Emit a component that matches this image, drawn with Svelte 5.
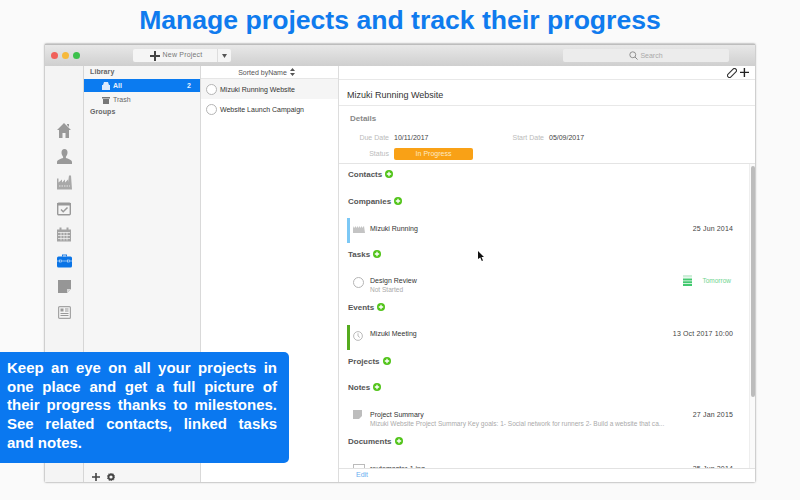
<script>
  const sections = [
    { name: "Contacts" },
    { name: "Companies", row: { kind: "company", title: "Mizuki Running", date: "25 Jun 2014", bar: "#7cc8f5" } },
    { name: "Tasks", row: { kind: "task", title: "Design Review", sub: "Not Started" } },
    { name: "Events", row: { kind: "event", title: "Mizuki Meeting", date: "13 Oct 2017 10:00", bar: "#55ab1e" } },
    { name: "Projects" },
    { name: "Notes", row: { kind: "note", title: "Project Summary", date: "27 Jan 2015", sub: "Mizuki Website Project Summary Key goals: 1- Social network for runners 2- Build a website that ca..." } },
    { name: "Documents", row: { kind: "doc", title: "routemaster-1.jpg", date: "25 Jun 2014" } }
  ];
</script>

<main>
  <h1>Manage projects and track their progress</h1>

  <div class="window">
    <div class="titlebar">
      <div class="lights">
        <span class="red"></span>
        <span class="yellow"></span>
        <span class="green"></span>
      </div>
      <div class="new-btn">
        <div class="new-main">
          <svg width="10" height="10" viewBox="0 0 10 10"><path d="M4 0h2v4h4v2H6v4H4V6H0V4h4z" fill="#444" /></svg>
          <span>New Project</span>
        </div>
        <div class="new-arrow"><svg width="5" height="4" viewBox="0 0 5 4"><path d="M0 0h5L2.500 4z" fill="#555" /></svg></div>
      </div>
      <div class="search">
        <svg width="9" height="9" viewBox="0 0 10 10"><circle cx="4.200" cy="4.200" r="3.300" fill="none" stroke="#888" /><path d="M6.700 6.700L9.500 9.500" stroke="#888" stroke-width="1.100" /></svg>
        <span>Search</span>
      </div>
    </div>

    <div class="panes">
      <nav class="rail">
        <svg width="14" height="15" viewBox="0 0 14 15"><path d="M7 0L14 7h-2v8H8.500v-5h-3v5H2V7H0z M10 1h2v3l-2-2z" fill="#999" /></svg>
        <svg width="15" height="15" viewBox="0 0 15 15"><path d="M7.500 0c2 0 3 1.500 3 3.500s-1 3.500-1.600 4.200v1.300c2 .8 6.100 1.600 6.100 4v2H0v-2c0-2.400 4.100-3.200 6.100-4V7.700C5.500 7 4.500 5.500 4.500 3.500S5.500 0 7.500 0z" fill="#999" /></svg>
        <svg width="15" height="14" viewBox="0 0 15 14"><path d="M0 14V3h1.500v4L5 4v3l3-3v3l3-3v3l1-7h2l1 14z" fill="#a8a8a8" /><path d="M2 10.500h11" stroke="#e4e4e4" stroke-width="1.200" stroke-dasharray="1.500 1" /></svg>
        <svg width="14" height="14" viewBox="0 0 14 14"><rect x=".7" y="1.700" width="12.600" height="11.600" rx="1" fill="none" stroke="#999" stroke-width="1.400" /><path d="M0 1.500h14v2.500H0z" fill="#999" /><path d="M4 8l2.200 2.200L10.500 6" fill="none" stroke="#999" stroke-width="1.500" /></svg>
        <svg width="14" height="14" viewBox="0 0 14 14"><path d="M0 2h2.500V0h2v2h5V0h2v2H14v12H0z" fill="#a4a4a4" /><path d="M1 5h12M1 8h12M1 11h12M4 4.500V13M7 4.500V13M10 4.500V13" stroke="#efefef" stroke-width=".8" /></svg>
        <svg width="15" height="14" viewBox="0 0 15 14"><path d="M5 3V1h5v2h-1V2H6v1z" fill="#1a7de8" /><rect y="3" width="15" height="11" rx="1.500" fill="#0a74e6" /><path d="M0 7.500h15" stroke="#a8d0f7" stroke-width=".8" /><rect x="2.500" y="6.500" width="2" height="2" fill="#0a74e6" stroke="#cfe5fb" stroke-width=".6" /><rect x="10.500" y="6.500" width="2" height="2" fill="#0a74e6" stroke="#cfe5fb" stroke-width=".6" /></svg>
        <svg width="13" height="13" viewBox="0 0 13 13"><path d="M0 0h13v9l-4 4H0z" fill="#969696" /><path d="M9 13V9h4z" fill="#d8d8d8" /></svg>
        <svg width="13" height="13" viewBox="0 0 13 13"><rect x=".6" y=".6" width="11.800" height="11.800" rx="1" fill="#f4f4f4" stroke="#a4a4a4" stroke-width="1.200" /><rect x="2.500" y="2.500" width="3" height="3" fill="#999" /><path d="M7 3h3.500M7 5h3.500M2.500 7.500h8M2.500 9.500h8" stroke="#999" /></svg>
      </nav>

      <aside class="library">
        <div class="group">Library</div>
        <div class="lib-row active">
          <svg width="8" height="8" viewBox="0 0 8 8"><path d="M1 3l1-3h4l1 3h1v5H0V3z" fill="#dbeafd" /></svg>
          <span>All</span>
          <b>2</b>
        </div>
        <div class="lib-row trash">
          <svg width="8" height="8" viewBox="0 0 8 8"><path d="M0 1h8v1.500H0zM1 3h6v5H1z" fill="#777" /></svg>
          <span>Trash</span>
        </div>
        <div class="group">Groups</div>
        <div class="lib-foot">
          <svg width="8" height="8" viewBox="0 0 8 8"><path d="M3.200 0h1.600v3.200H8v1.600H4.800V8H3.200V4.800H0V3.200h3.200z" fill="#444" /></svg>
          <svg width="8" height="8" viewBox="0 0 8 8"><circle cx="4" cy="4" r="2.500" fill="none" stroke="#444" stroke-width="1.800" /><circle cx="4" cy="4" r="3.800" fill="none" stroke="#444" stroke-dasharray="1.200 1.200" /></svg>
        </div>
      </aside>

      <section class="list">
        <div class="sort">
          <span>Sorted byName</span>
          <svg width="5" height="8" viewBox="0 0 5 8"><path d="M2.500 0L5 3H0zM2.500 8L0 5h5z" fill="#555" /></svg>
        </div>
        <div class="project selected"><i class="check"></i><span>Mizuki Running Website</span></div>
        <div class="project"><i class="check"></i><span>Website Launch Campaign</span></div>
      </section>

      <section class="detail">
        <div class="tools">
          <svg width="10" height="10" viewBox="0 0 10 10"><rect x="3" y="-.5" width="4" height="11" rx="2" fill="none" stroke="#333" stroke-width="1.100" transform="rotate(45 5 5)" /></svg>
          <svg width="9" height="9" viewBox="0 0 9 9"><path d="M3.700 0h1.400v3.700H9v1.400H5.100V9H3.700V5.100H0V3.700h3.700z" fill="#222" /></svg>
        </div>
        <div class="title">Mizuki Running Website</div>
        <div class="details">
          <div class="details-head">Details</div>
          <div class="fields">
            <span class="label">Due Date</span><span class="value">10/11/2017</span>
            <span class="label start">Start Date</span><span class="value">05/09/2017</span>
            <span class="label">Status</span><span class="status">In Progress</span>
          </div>
        </div>

        <div class="scroll">
          {#each sections as s}
            <div class="head">
              <span>{s.name}</span>
              <svg width="8" height="8" viewBox="0 0 8 8"><circle cx="4" cy="4" r="4" fill="#52c41a" /><path d="M1.800 4h4.400M4 1.800v4.400" stroke="#fff" stroke-width="1.300" /></svg>
            </div>
            {#if s.row}
              <div class="row {s.row.kind}">
                {#if s.row.bar}<i class="bar" style="background: {s.row.bar}"></i>{/if}
                <div class="row-icon">
                  {#if s.row.kind === "company"}
                    <svg width="12" height="9" viewBox="0 0 12 9"><path d="M0 9V2l1 2 2-2v2l2-2v2l2-2v2l2-2v2l2-2 1 7z" fill="#c4c4c4" /></svg>
                  {:else if s.row.kind === "task"}
                    <i class="check"></i>
                  {:else if s.row.kind === "event"}
                    <svg width="10" height="10" viewBox="0 0 10 10"><circle cx="5" cy="5" r="4.400" fill="none" stroke="#aaa" stroke-width=".8" /><path d="M5 2.300V5l1.800 1.500" fill="none" stroke="#aaa" stroke-width=".8" /></svg>
                  {:else if s.row.kind === "note"}
                    <svg width="9" height="9" viewBox="0 0 9 9"><path d="M0 0h9v6L6 9H0z" fill="#bdbdbd" /></svg>
                  {:else}
                    <svg width="12" height="10" viewBox="0 0 12 10"><rect x=".5" y=".5" width="11" height="9" fill="#fff" stroke="#bbb" /></svg>
                  {/if}
                </div>
                <div class="row-text">
                  <div class="row-title">{s.row.title}</div>
                  {#if s.row.sub}<div class="row-sub">{s.row.sub}</div>{/if}
                </div>
                {#if s.row.date}<div class="date">{s.row.date}</div>{/if}
                {#if s.row.kind === "task"}
                  <div class="due">
                    <svg width="9" height="11" viewBox="0 0 9 11"><path d="M0 0h9v2.500H0z" fill="#cdeed8" /><path d="M0 3.500h9v2H0zM0 6.250h9v2H0zM0 9h9v2H0z" fill="#42c96f" /></svg>
                    <span>Tomorrow</span>
                  </div>
                {/if}
              </div>
            {/if}
          {/each}
          <div class="scrollbar"><div class="thumb"></div></div>
        </div>

        <div class="edit">Edit</div>
      </section>
    </div>
  </div>

  <div class="callout">Keep an eye on all your projects in one place and get a full picture of their progress thanks to milestones. See related contacts, linked tasks and notes.</div>

  <svg class="cursor" width="7" height="10" viewBox="0 0 7 10"><path d="M0 0l6 6H3.500L5 9.500 3.800 10 2.300 6.500 0 8z" fill="#111" /></svg>
</main>

<style>
  :global(body) {
    margin: 0;
    background: #f9f9f9;
  }
  main {
    position: relative;
    width: 800px;
    height: 500px;
    overflow: hidden;
    font-family: "Liberation Sans", Arial, sans-serif;
    background: #fafafa;
    color: #333;
  }
  h1 {
    margin: 0;
    height: 44px;
    line-height: 41px;
    text-align: center;
    font-size: 26.600px;
    font-weight: 700;
    color: #0f7bee;
  }
  .window {
    margin-left: 45px;
    width: 710px;
    height: 438px;
    display: flex;
    flex-direction: column;
    overflow: hidden;
    background: #fff;
    box-shadow: 0 0 2px #777;
  }
  .titlebar {
    height: 22px;
    flex: none;
    display: flex;
    align-items: center;
    background: linear-gradient(#e8e8e8, #cfcfcf);
    border-top: 1px solid #bdbdbd;
    box-sizing: border-box;
  }
  .lights {
    display: flex;
    gap: 4px;
    margin-left: 6px;
    width: 82px;
  }
  .lights span {
    width: 7px;
    height: 7px;
    border-radius: 50%;
  }
  .red { background: #f0605a; }
  .yellow { background: #f6b93b; }
  .green { background: #3cc14c; }
  .new-btn {
    width: 98px;
    height: 13px;
    display: flex;
    background: #f5f5f5;
    border-radius: 2px;
    font-size: 7px;
    color: #777;
    letter-spacing: 0.2px;
  }
  .new-main {
    flex: 1;
    display: flex;
    align-items: center;
    justify-content: center;
    gap: 3px;
    padding-left: 2px;
  }
  .new-main span { margin-top: -2px; }
  .new-arrow {
    width: 13px;
    display: flex;
    align-items: center;
    justify-content: center;
    border-left: 1px solid #ddd;
  }
  .search {
    margin-left: 332px;
    width: 166px;
    height: 13px;
    display: flex;
    align-items: center;
    justify-content: center;
    gap: 2px;
    background: #ececec;
    border-radius: 2px;
    font-size: 7px;
    color: #aaa;
  }
  .panes {
    flex: 1;
    display: flex;
    min-height: 0;
  }
  .rail {
    width: 39px;
    flex: none;
    box-sizing: border-box;
    padding-top: 57px;
    display: flex;
    flex-direction: column;
    align-items: center;
    background: #f4f4f4;
    border-right: 1px solid #d6d6d6;
  }
  .rail svg {
    height: 15px;
    margin-bottom: 11px;
  }
  .library {
    position: relative;
    width: 117px;
    flex: none;
    box-sizing: border-box;
    background: #f6f6f6;
    border-right: 1px solid #d9d9d9;
    font-size: 7px;
  }
  .group {
    height: 13px;
    line-height: 12px;
    padding-left: 6px;
    font-weight: 700;
    color: #666;
    letter-spacing: 0.1px;
  }
  .lib-row {
    height: 13px;
    display: flex;
    align-items: center;
    padding-left: 18px;
    gap: 3px;
    color: #666;
  }
  .lib-row.active {
    background: #0b7bf0;
    color: #e8f2fe;
    font-weight: 700;
  }
  .lib-row.trash { margin-top: 1px; }
  .lib-row b {
    margin-left: auto;
    margin-right: 9px;
  }
  .lib-foot {
    position: absolute;
    left: 8px;
    bottom: 1px;
    display: flex;
    gap: 7px;
  }
  .list {
    width: 138px;
    flex: none;
    box-sizing: border-box;
    background: #fff;
    border-right: 1px solid #ddd;
  }
  .sort {
    height: 13px;
    display: flex;
    align-items: center;
    justify-content: center;
    gap: 3px;
    border-bottom: 1px solid #e6e6e6;
    box-sizing: border-box;
    font-size: 7px;
    color: #555;
    padding-right: 6px;
  }
  .project {
    height: 20px;
    display: flex;
    align-items: center;
    gap: 3px;
    padding-left: 5px;
    font-size: 7px;
    color: #333;
  }
  .project.selected { background: #f5f5f5; }
  .check {
    display: block;
    width: 11px;
    height: 11px;
    box-sizing: border-box;
    border: 1px solid #b5b5b5;
    border-radius: 50%;
    background: #fff;
  }
  .detail {
    flex: 1;
    min-width: 0;
    display: flex;
    flex-direction: column;
  }
  .tools {
    height: 14px;
    flex: none;
    display: flex;
    align-items: center;
    justify-content: flex-end;
    gap: 3px;
    padding-right: 6px;
    box-sizing: border-box;
    border-bottom: 1px solid #e8e8e8;
  }
  .title {
    height: 26px;
    flex: none;
    line-height: 30px;
    padding-left: 8px;
    font-size: 9px;
    color: #333;
    box-sizing: border-box;
    border-bottom: 1px solid #e8e8e8;
  }
  .details {
    height: 58px;
    flex: none;
    box-sizing: border-box;
    padding: 8px 0 0 11px;
    border-bottom: 1px solid #e4e4e4;
  }
  .details-head {
    font-size: 8px;
    font-weight: 700;
    color: #888;
    height: 15px;
  }
  .fields {
    display: grid;
    grid-template-columns: 39px 106px 39px auto;
    grid-auto-rows: 16.500px;
    column-gap: 5px;
    align-items: center;
    font-size: 7px;
  }
  .label {
    text-align: right;
    color: #bbb;
  }
  .value { color: #444; }
  .status {
    width: 79px;
    height: 12px;
    line-height: 12px;
    text-align: center;
    background: #f9a116;
    color: #fde9c4;
    border-radius: 2px;
  }
  .scroll {
    position: relative;
    flex: 1;
    min-height: 0;
    overflow: hidden;
    padding: 1px 22px 0 9px;
  }
  .head {
    height: 26.670px;
    display: flex;
    align-items: flex-start;
    gap: 3px;
    font-size: 8px;
    font-weight: 700;
    color: #555;
    line-height: 20px;
  }
  .head svg { margin-top: 5px; }
  .row {
    position: relative;
    height: 26.670px;
    display: flex;
    align-items: flex-start;
    font-size: 7px;
    color: #333;
  }
  .bar {
    position: absolute;
    left: -1px;
    top: 0;
    width: 3px;
    height: 25px;
  }
  .row-icon {
    width: 17px;
    margin-left: 5px;
    padding-top: 6px;
    flex: none;
  }
  .row-text {
    flex: 1;
    min-width: 0;
    padding-top: 6px;
  }
  .row-title { line-height: 9px; }
  .row-sub {
    line-height: 9px;
    font-size: 6.550px;
    color: #aaa;
    white-space: nowrap;
  }
  .date {
    padding-top: 6px;
    line-height: 9px;
    color: #444;
    letter-spacing: 0.15px;
  }
  .task .row-icon { padding-top: 5px; }
  .task .row-text { padding-top: 4px; }
  .event .row-icon { padding-top: 6px; }
  .event .row-text, .event .date { padding-top: 4.500px; }
  .note .row-text, .note .date { padding-top: 5px; }
  .note .row-icon { padding-top: 5px; }
  .due {
    display: flex;
    align-items: flex-start;
    gap: 10px;
    padding-top: 3px;
    margin-right: 2px;
    color: #6fd48f;
    font-size: 6.500px;
  }
  .due span { margin-top: 2px; }
  .note .row-sub { width: 330px; }
  .scrollbar {
    position: absolute;
    right: 0;
    top: 0;
    bottom: 0;
    width: 6px;
    background: #fafafa;
    border-left: 1px solid #eee;
    box-sizing: border-box;
  }
  .thumb {
    margin: 2px 0 0 1px;
    width: 4px;
    height: 231px;
    border-radius: 2px;
    background: #bcbcbc;
  }
  .edit {
    height: 14px;
    flex: none;
    position: relative;
    background: #fff;
    box-sizing: border-box;
    border-top: 1px solid #e2e2e2;
    padding-left: 17px;
    line-height: 12px;
    font-size: 7px;
    color: #6aaef0;
  }
  .callout {
    position: absolute;
    left: 0;
    top: 352px;
    width: 289px;
    height: 111px;
    box-sizing: border-box;
    padding: 7px 12px 0 7px;
    background: #0a78f0;
    border-radius: 0 5px 5px 0;
    color: #fff;
    font-size: 15px;
    font-weight: 700;
    line-height: 18.700px;
    text-align: justify;
  }
  .cursor {
    position: absolute;
    left: 478px;
    top: 251px;
  }
</style>
